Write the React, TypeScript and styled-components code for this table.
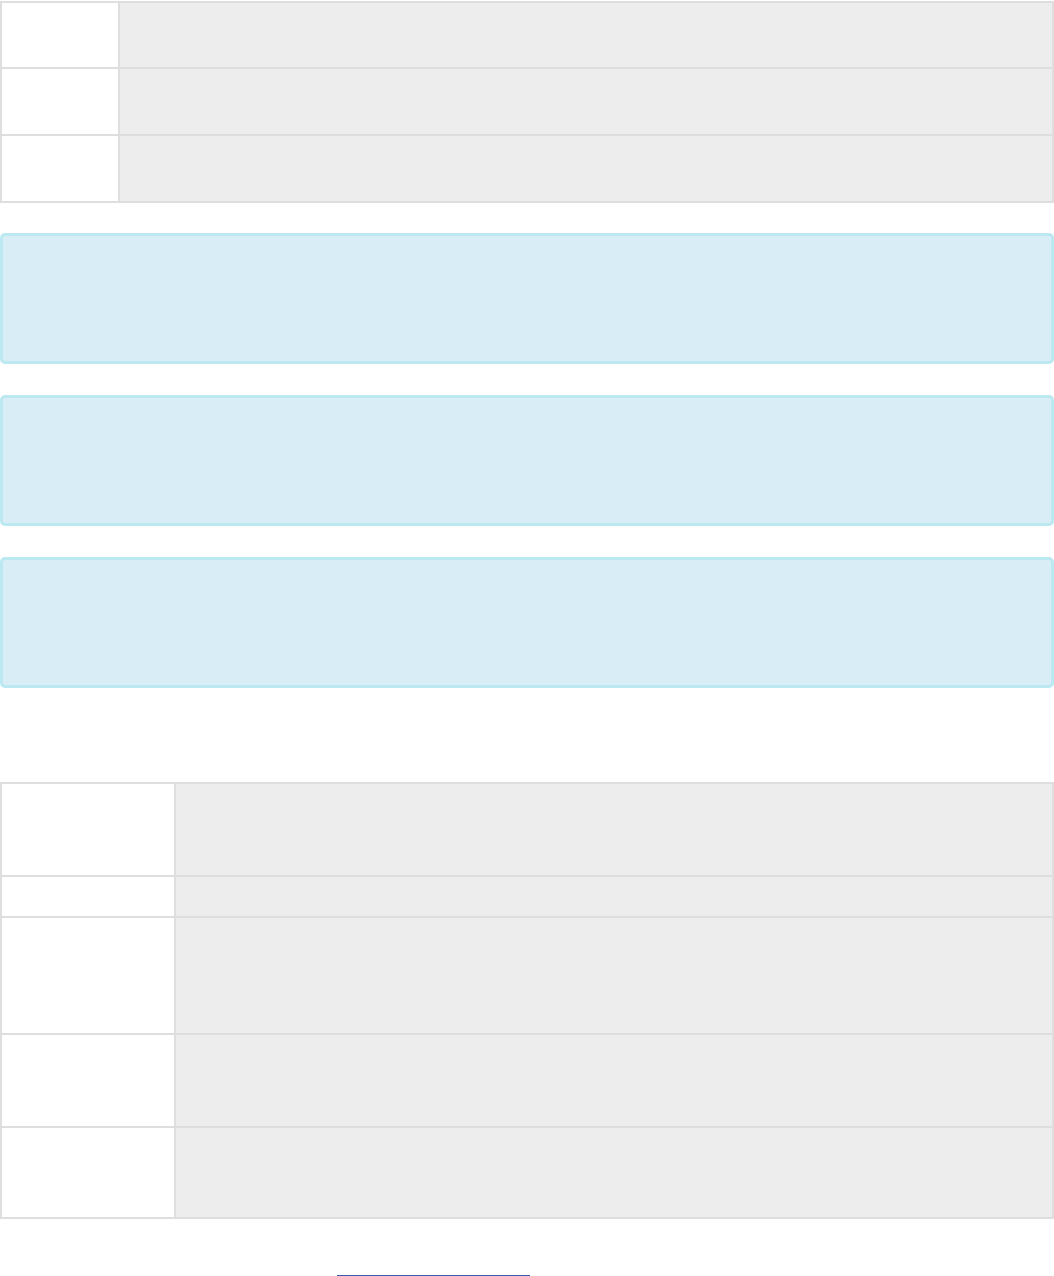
import React from 'react'
import styled, { createGlobalStyle } from 'styled-components'

const GlobalStyle = createGlobalStyle`
  html, body {
    margin: 0;
    padding: 0;
    background: #fff;
    font-family: "Liberation Sans", Arial, sans-serif;
  }
`

const Page = styled.div`
  width: 1054px;
  padding-top: 1px;
`

const Table = styled.table<{ $labelWidth: number }>`
  width: 1054px;
  border-collapse: collapse;
  border: 2px solid #dedede;
  table-layout: fixed;

  col.label {
    width: ${(p) => p.$labelWidth}px;
  }
`

const Label = styled.td<{ $h: number }>`
  height: ${(p) => p.$h}px;
  padding: 0;
  background: #fff;
  border: 2px solid #dedede;
`

const Value = styled.td`
  padding: 0;
  background: #ededed;
  border: 2px solid #dedede;
`

const Alerts = styled.div`
  display: flex;
  flex-direction: column;
  gap: 31px;
  margin-top: 30px;
`

const Alert = styled.div`
  height: 125px;
  background: #d9edf6;
  border: 3px solid #bce8f1;
  border-radius: 5px;
`

const SecondTable = styled(Table)`
  margin-top: 94px;
`

const Footer = styled.div`
  margin-top: 41px;
  padding-left: 337px;
`

const MoreLink = styled.a`
  display: block;
  width: 193px;
  height: 15px;
  border-bottom: 2px solid #3a57b2;
`

const topRows = [64, 65, 65]
const bottomRows = [91, 39, 115, 91, 89]

export default function App() {
  return (
    <Page>
      <GlobalStyle />
      <Table $labelWidth={118}>
        <colgroup>
          <col className="label" />
          <col />
        </colgroup>
        <tbody>
          {topRows.map((h, i) => (
            <tr key={i}>
              <Label $h={h} />
              <Value />
            </tr>
          ))}
        </tbody>
      </Table>

      <Alerts>
        <Alert />
        <Alert />
        <Alert />
      </Alerts>

      <SecondTable $labelWidth={174}>
        <colgroup>
          <col className="label" />
          <col />
        </colgroup>
        <tbody>
          {bottomRows.map((h, i) => (
            <tr key={i}>
              <Label $h={h} />
              <Value />
            </tr>
          ))}
        </tbody>
      </SecondTable>

      <Footer>
        <MoreLink href="#" />
      </Footer>
    </Page>
  )
}
